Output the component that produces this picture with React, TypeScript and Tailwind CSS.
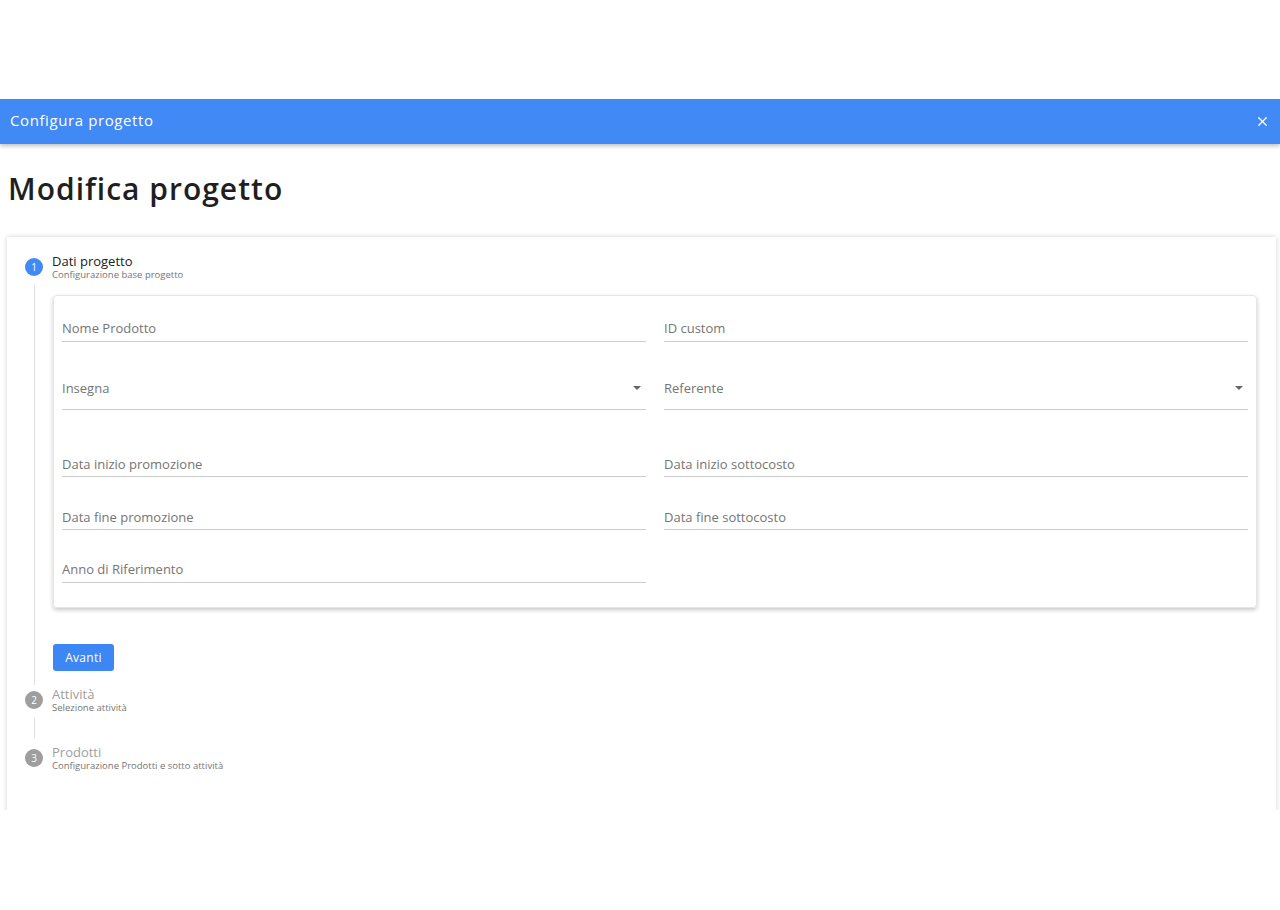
import React from 'react';
import { X } from 'lucide-react';

const font = { fontFamily: '"Open Sans", "Liberation Sans", sans-serif' };

interface FieldProps {
  label: string;
  h: string;
  pb: string;
  select?: boolean;
}

const Field: React.FC<FieldProps> = ({ label, h, pb, select }) => (
  <div className={`flex items-end justify-between border-b border-[#cccccc] ${h} ${pb}`}>
    <span className="text-[13px] leading-[15px] text-[#757575]">{label}</span>
    {select && (
      <span className="mr-[5px] mb-[6px] h-0 w-0 border-x-[4px] border-t-[4px] border-x-transparent border-t-[#666666]" />
    )}
  </div>
);

interface StepHeadProps {
  n: number;
  title: string;
  subtitle: string;
  active?: boolean;
}

const StepHead: React.FC<StepHeadProps> = ({ n, title, subtitle, active }) => (
  <div className="flex h-[20px] items-start">
    <div
      className={`mt-[1px] flex h-[18px] w-[18px] shrink-0 items-center justify-center rounded-full text-[10px] text-white ${
        active ? 'bg-[#4189f5]' : 'bg-[#9e9e9e]'
      }`}
    >
      {n}
    </div>
    <div className="ml-[9px] -mt-[4px] flex flex-col">
      <span className={`text-[13px] leading-[16px] ${active ? 'text-[#212121]' : 'text-[#9e9e9e]'}`}>
        {title}
      </span>
      <span className="text-[9.5px] leading-[12px] text-[#757575]">{subtitle}</span>
    </div>
  </div>
);

export default function App() {
  return (
    <div className="min-h-[910px] bg-white" style={font}>
      <div className="h-[99px]" />
      <div className="h-[711px] overflow-hidden">
        <div className="flex h-[45px] items-center justify-between bg-[#4189f5] px-[10px] shadow-[0_2px_4px_rgba(0,0,0,0.25)]">
          <span className="-mt-[2px] text-[15px] tracking-[0.6px] text-white">Configura progetto</span>
          <X className="h-[15px] w-[15px] text-white" strokeWidth={2} />
        </div>

        <h1 className="ml-[8px] mt-[27px] text-[30px] font-semibold leading-[36px] tracking-[1px] text-[#1f1f1f]">
          Modifica progetto
        </h1>

        <div className="ml-[7px] mr-[4px] mt-[30px] bg-white pb-[60px] pl-[18px] pr-[19px] pt-[20px] shadow-[0_0_5px_rgba(0,0,0,0.18)]">
          <StepHead n={1} title="Dati progetto" subtitle="Configurazione base progetto" active />
          <div className="ml-[9px] mt-[8px] border-l border-[#e0e0e0] pb-[14px] pl-[18px] pt-[10px]">
            <div className="rounded-[4px] border border-[#e6e6e6] px-[8px] pb-[24px] shadow-[0_2px_4px_rgba(0,0,0,0.22)]">
              <div className="grid grid-cols-2 gap-x-[18px]">
                <Field label="Nome Prodotto" h="h-[46px]" pb="pb-[5px]" />
                <Field label="ID custom" h="h-[46px]" pb="pb-[5px]" />
                <Field label="Insegna" h="h-[68px]" pb="pb-[13px]" select />
                <Field label="Referente" h="h-[68px]" pb="pb-[13px]" select />
                <Field label="Data inizio promozione" h="h-[67px]" pb="pb-[4px]" />
                <Field label="Data inizio sottocosto" h="h-[67px]" pb="pb-[4px]" />
                <Field label="Data fine promozione" h="h-[53px]" pb="pb-[4px]" />
                <Field label="Data fine sottocosto" h="h-[53px]" pb="pb-[4px]" />
                <Field label="Anno di Riferimento" h="h-[53px]" pb="pb-[5px]" />
              </div>
            </div>
            <button className="mt-[36px] h-[27px] w-[61px] rounded-[3px] bg-[#3d87f5] text-[12px] font-medium tracking-[0.3px] text-white">
              Avanti
            </button>
          </div>
          <div className="mt-[5px]">
            <StepHead n={2} title="Attività" subtitle="Selezione attività" />
          </div>
          <div className="ml-[9px] mb-[10px] mt-[8px] h-[20px] border-l border-[#e0e0e0]" />
          <StepHead n={3} title="Prodotti" subtitle="Configurazione Prodotti e sotto attività" />
        </div>
      </div>
    </div>
  );
}
